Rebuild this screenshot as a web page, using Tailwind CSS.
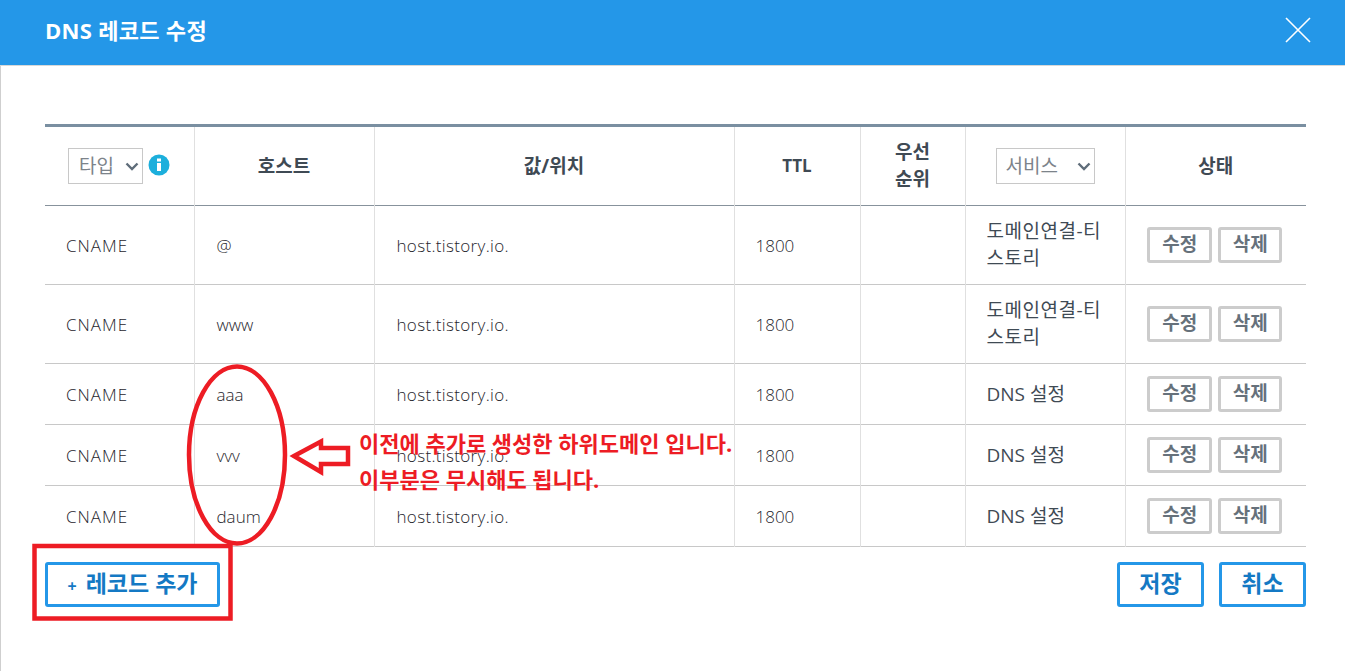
<!DOCTYPE html>
<html lang="ko">
<head>
    <meta charset="UTF-8">
    <title>DNS 레코드 수정</title>
    <script src="https://cdn.jsdelivr.net/npm/@tailwindcss/browser@4"></script>
</head>
<body class="bg-white overflow-hidden font-['Open_Sans','Noto_Sans_CJK_KR',sans-serif]">
    <div class="relative h-[671px] w-[1345px] border-l border-[#cfcfcf]">
        <!-- Header -->
        <div class="-ml-px flex h-[66px] items-center justify-between border-b border-[#d8d8d8] bg-[#2497e8] pl-[45px] pr-[34px]">
            <h1 class="mb-[4px] text-[22px] font-bold tracking-[0.3px] text-white">DNS 레코드 수정</h1>
            <svg width="26" height="26" viewBox="0 0 26 26" class="mb-[6px]" stroke="white" stroke-width="1.6" fill="none"><path d="M1 1L25 25M25 1L1 25"/></svg>
        </div>

        <!-- Table -->
        <div class="ml-[44px] mt-[58px] w-[1261px]">
            <table class="w-full table-fixed border-collapse border-t-[3px] border-[#7a8fa1] text-[17px] text-[#1f262d]">
                <colgroup>
                    <col class="w-[149px]"><col class="w-[180px]"><col class="w-[360px]"><col class="w-[126px]"><col class="w-[105px]"><col class="w-[160px]"><col class="w-[181px]">
                </colgroup>
                <thead>
                    <tr class="h-[80px] border-b border-[#87929c] text-center text-[19px] font-bold text-[#3f4a54]">
                        <th class="border-r border-[#e0e0e0]">
                            <div class="ml-[23px] flex items-center gap-[5px]">
                                <div class="relative">
                                    <select class="block h-[36px] w-[75px] appearance-none border border-[#c8c8c8] bg-white pl-[10px] text-[19px] font-normal text-[#7c838a]"><option>타입</option></select>
                                    <svg class="absolute right-[4px] top-[14px]" width="14" height="9" viewBox="0 0 14 9" fill="none" stroke="#5f6d7a" stroke-width="2.4"><path d="M1.5 1.5L7 7L12.5 1.5"/></svg>
                                </div>
                                <svg width="22" height="22" viewBox="0 0 22 22" class="mb-[2px]"><circle cx="11" cy="11" r="10.5" fill="#1cafdc"/><rect x="9" y="9" width="4" height="8" fill="white"/><rect x="9" y="4.5" width="4" height="3" fill="white"/></svg>
                            </div>
                        </th>
                        <th class="border-r border-[#e0e0e0]">호스트</th>
                        <th class="border-r border-[#e0e0e0]">값/위치</th>
                        <th class="border-r border-[#e0e0e0] text-[17px]">TTL</th>
                        <th class="border-r border-[#e0e0e0] leading-[27px]">우선<br>순위</th>
                        <th class="border-r border-[#e0e0e0]">
                            <div class="relative mx-auto w-[99px]">
                                <select class="block h-[36px] w-[99px] appearance-none border border-[#c8c8c8] bg-white pl-[9px] text-[19px] font-normal text-[#7c838a]"><option>서비스</option></select>
                                <svg class="absolute right-[4px] top-[14px]" width="14" height="9" viewBox="0 0 14 9" fill="none" stroke="#5f6d7a" stroke-width="2.4"><path d="M1.5 1.5L7 7L12.5 1.5"/></svg>
                            </div>
                        </th>
                        <th>상태</th>
                    </tr>
                </thead>
                <tbody>
                    <tr class="h-[79px] border-b border-[#c8c8c8]">
                        <td class="border-r border-[#e0e0e0] pl-[21px] pt-[2px] font-light tracking-[1px]">CNAME</td>
                        <td class="border-r border-[#e0e0e0] pl-[22px] pt-[2px] font-light">@</td>
                        <td class="border-r border-[#e0e0e0] pl-[22px] pt-[2px] font-light tracking-[0.33px]">host.tistory.io.</td>
                        <td class="border-r border-[#e0e0e0] pl-[21px] pt-[2px] font-light">1800</td>
                        <td class="border-r border-[#e0e0e0]"></td>
                        <td class="border-r border-[#e0e0e0] pl-[21px] text-[19px] leading-[27px] tracking-[0.5px] text-[#3f4a54]">도메인연결-티<br>스토리</td>
                        <td><div class="flex justify-center gap-[6px] pr-[2px]"><button class="h-[36px] w-[65px] rounded-[3px] border-[3px] border-[#cccccc] pb-[5px] text-[19px] font-bold text-[#66717b]">수정</button><button class="h-[36px] w-[64px] rounded-[3px] border-[3px] border-[#cccccc] pb-[5px] text-[19px] font-bold text-[#66717b]">삭제</button></div></td>
                    </tr>
                    <tr class="h-[79px] border-b border-[#c8c8c8]">
                        <td class="border-r border-[#e0e0e0] pl-[21px] pt-[2px] font-light tracking-[1px]">CNAME</td>
                        <td class="border-r border-[#e0e0e0] pl-[22px] pt-[2px] font-light">www</td>
                        <td class="border-r border-[#e0e0e0] pl-[22px] pt-[2px] font-light tracking-[0.33px]">host.tistory.io.</td>
                        <td class="border-r border-[#e0e0e0] pl-[21px] pt-[2px] font-light">1800</td>
                        <td class="border-r border-[#e0e0e0]"></td>
                        <td class="border-r border-[#e0e0e0] pl-[21px] text-[19px] leading-[27px] tracking-[0.5px] text-[#3f4a54]">도메인연결-티<br>스토리</td>
                        <td><div class="flex justify-center gap-[6px] pr-[2px]"><button class="h-[36px] w-[65px] rounded-[3px] border-[3px] border-[#cccccc] pb-[5px] text-[19px] font-bold text-[#66717b]">수정</button><button class="h-[36px] w-[64px] rounded-[3px] border-[3px] border-[#cccccc] pb-[5px] text-[19px] font-bold text-[#66717b]">삭제</button></div></td>
                    </tr>
                    <tr class="h-[61px] border-b border-[#c8c8c8]">
                        <td class="border-r border-[#e0e0e0] pl-[21px] pt-[2px] font-light tracking-[1px]">CNAME</td>
                        <td class="border-r border-[#e0e0e0] pl-[22px] pt-[2px] font-light">aaa</td>
                        <td class="border-r border-[#e0e0e0] pl-[22px] pt-[2px] font-light tracking-[0.33px]">host.tistory.io.</td>
                        <td class="border-r border-[#e0e0e0] pl-[21px] pt-[2px] font-light">1800</td>
                        <td class="border-r border-[#e0e0e0]"></td>
                        <td class="border-r border-[#e0e0e0] pl-[21px] text-[19px] text-[#3f4a54]">DNS 설정</td>
                        <td><div class="flex justify-center gap-[6px] pr-[2px]"><button class="h-[36px] w-[65px] rounded-[3px] border-[3px] border-[#cccccc] pb-[5px] text-[19px] font-bold text-[#66717b]">수정</button><button class="h-[36px] w-[64px] rounded-[3px] border-[3px] border-[#cccccc] pb-[5px] text-[19px] font-bold text-[#66717b]">삭제</button></div></td>
                    </tr>
                    <tr class="h-[61px] border-b border-[#c8c8c8]">
                        <td class="border-r border-[#e0e0e0] pl-[21px] pt-[2px] font-light tracking-[1px]">CNAME</td>
                        <td class="border-r border-[#e0e0e0] pl-[22px] pt-[2px] font-light">vvv</td>
                        <td class="border-r border-[#e0e0e0] pl-[22px] pt-[2px] font-light tracking-[0.33px]">host.tistory.io.</td>
                        <td class="border-r border-[#e0e0e0] pl-[21px] pt-[2px] font-light">1800</td>
                        <td class="border-r border-[#e0e0e0]"></td>
                        <td class="border-r border-[#e0e0e0] pl-[21px] text-[19px] text-[#3f4a54]">DNS 설정</td>
                        <td><div class="flex justify-center gap-[6px] pr-[2px]"><button class="h-[36px] w-[65px] rounded-[3px] border-[3px] border-[#cccccc] pb-[5px] text-[19px] font-bold text-[#66717b]">수정</button><button class="h-[36px] w-[64px] rounded-[3px] border-[3px] border-[#cccccc] pb-[5px] text-[19px] font-bold text-[#66717b]">삭제</button></div></td>
                    </tr>
                    <tr class="h-[61px] border-b border-[#c8c8c8]">
                        <td class="border-r border-[#e0e0e0] pl-[21px] pt-[2px] font-light tracking-[1px]">CNAME</td>
                        <td class="border-r border-[#e0e0e0] pl-[22px] pt-[2px] font-light">daum</td>
                        <td class="border-r border-[#e0e0e0] pl-[22px] pt-[2px] font-light tracking-[0.33px]">host.tistory.io.</td>
                        <td class="border-r border-[#e0e0e0] pl-[21px] pt-[2px] font-light">1800</td>
                        <td class="border-r border-[#e0e0e0]"></td>
                        <td class="border-r border-[#e0e0e0] pl-[21px] text-[19px] text-[#3f4a54]">DNS 설정</td>
                        <td><div class="flex justify-center gap-[6px] pr-[2px]"><button class="h-[36px] w-[65px] rounded-[3px] border-[3px] border-[#cccccc] pb-[5px] text-[19px] font-bold text-[#66717b]">수정</button><button class="h-[36px] w-[64px] rounded-[3px] border-[3px] border-[#cccccc] pb-[5px] text-[19px] font-bold text-[#66717b]">삭제</button></div></td>
                    </tr>
                </tbody>
            </table>

            <!-- Footer buttons -->
            <div class="mt-[15px] flex justify-between">
                <button class="flex h-[45px] w-[175px] items-center justify-center gap-[9px] rounded-[3px] border-[3px] border-[#2497e8] pb-[3px] text-[23px] font-bold text-[#1479c4]"><span class="mt-[6px] text-[16px]">+</span>레코드 추가</button>
                <div class="flex gap-[15px]">
                    <button class="h-[45px] w-[87px] rounded-[3px] border-[3px] border-[#2497e8] pb-[3px] text-[23px] font-bold text-[#1479c4]">저장</button>
                    <button class="h-[45px] w-[87px] rounded-[3px] border-[3px] border-[#2497e8] pb-[3px] text-[23px] font-bold text-[#1479c4]">취소</button>
                </div>
            </div>
        </div>

        <!-- Red annotations drawn over the table -->
        <svg class="absolute -left-px top-0 pointer-events-none" width="1345" height="671" fill="none" stroke="#ed1c24">
            <ellipse cx="237" cy="455" rx="48" ry="88.5" stroke-width="4.5"/>
            <path d="M294 456L321 441.5V448H348V464H321V472Z" stroke-width="4.5"/>
            <rect x="34.5" y="546" width="196" height="72.5" stroke-width="4.5"/>
        </svg>
        <div class="absolute left-[358px] top-[425px] text-[22px] leading-[36px] font-bold whitespace-nowrap text-[#ed1c24]">
            <p>이전에 추가로 생성한 하위도메인 입니다.</p>
            <p>이부분은 무시해도 됩니다.</p>
        </div>
    </div>
</body>
</html>
